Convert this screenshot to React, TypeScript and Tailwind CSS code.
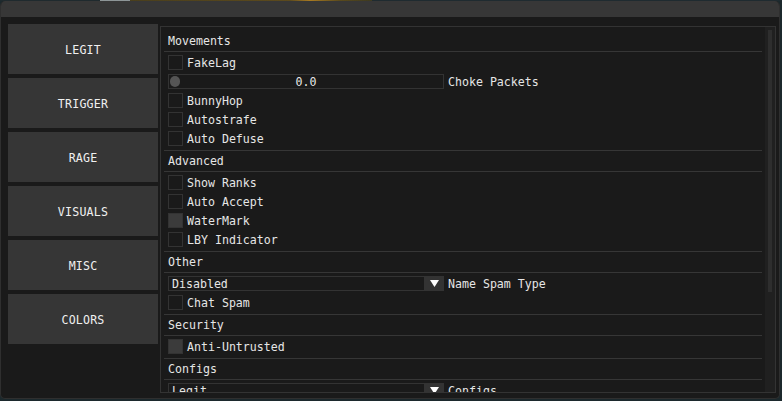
const tabs = ["LEGIT", "TRIGGER", "RAGE", "VISUALS", "MISC", "COLORS"];

const Separator = () => <div className="h-px w-[598px] -ml-1 -mb-px bg-[#363636] shrink-0" />;

const Header = ({ title }: { title: string }) => (
  <div className="h-[13px] leading-[13px] shrink-0 translate-y-px">{title}</div>
);

const Checkbox = ({ label, checked = false }: { label: string; checked?: boolean }) => (
  <div className="flex items-center h-[15px] shrink-0">
    <div
      className={`w-[15px] h-[15px] border border-[#333333] ${checked ? "bg-[#3b3b3b]" : "bg-[#1a1a1a]"}`}
    />
    <span className="ml-1 leading-[15px] translate-y-px">{label}</span>
  </div>
);

const SliderRow = ({ value, label }: { value: string; label: string }) => (
  <div className="flex items-center h-[15px] shrink-0">
    <div className="relative w-[276px] h-[15px] border border-[#333333] flex items-center justify-center">
      <div className="absolute left-px top-px w-[10px] h-[11px] rounded-full bg-[#555555]" />
      <span className="leading-[13px] translate-y-px">{value}</span>
    </div>
    <span className="ml-1 leading-[15px] translate-y-px">{label}</span>
  </div>
);

const ComboRow = ({ value, label }: { value: string; label: string }) => (
  <div className="flex items-center h-[15px] shrink-0">
    <div className="w-[276px] h-[15px] border border-[#333333] flex items-center">
      <span className="flex-1 pl-[3px] leading-[13px] translate-y-px">{value}</span>
      <div className="w-[20px] h-[15px] -mr-px bg-[#333333] flex items-center justify-center">
        <svg width="9" height="7" viewBox="0 0 9 7">
          <path d="M0 0 H9 L4.5 7 Z" fill="#ffffff" />
        </svg>
      </div>
    </div>
    <span className="ml-1 leading-[15px] translate-y-px">{label}</span>
  </div>
);

export default function App() {
  return (
    <div className="w-[782px] h-[401px] bg-[#1c292d] overflow-hidden font-['DejaVu_Sans_Mono',monospace] text-[11.6px] text-[#e6e6e6]">
      <div className="h-px w-full bg-[linear-gradient(90deg,#1f2a2e_0px,#1f2a2e_100px,#8d9597_100px,#8d9597_130px,#4a3f1c_130px,#5c4a1d_290px,#a87a22_310px,#5a4a1c_340px,#3d3a20_372px,#1f2b30_372px)]" />
      <div className="w-[780px] h-[398px] rounded-[5px] overflow-hidden bg-[#1a1a1a] border-x border-b border-[#2f2f2f] flex flex-col">
        <div className="h-[16px] bg-[#373737] shrink-0 -mx-px" />
        <div className="flex flex-1 pl-[7px] pt-[7px]">
          <div className="flex flex-col gap-1 w-[150px] shrink-0">
            {tabs.map((t) => (
              <div
                key={t}
                className="h-[50px] pt-[3px] bg-[#363636] flex items-center justify-center text-[#f0f0f0] tracking-[0.2px]"
              >
                {t}
              </div>
            ))}
          </div>
          <div className="ml-[2px] mt-[2px] w-[616px] h-[367px] border border-[#333333] flex overflow-hidden">
            <div className="flex-1 flex flex-col gap-1 pl-[7px] pt-[7px] pr-[3px] overflow-hidden">
              <Header title="Movements" />
              <Separator />
              <Checkbox label="FakeLag" />
              <SliderRow value="0.0" label="Choke Packets" />
              <Checkbox label="BunnyHop" />
              <Checkbox label="Autostrafe" />
              <Checkbox label="Auto Defuse" />
              <Separator />
              <Header title="Advanced" />
              <Separator />
              <Checkbox label="Show Ranks" />
              <Checkbox label="Auto Accept" />
              <Checkbox label="WaterMark" checked />
              <Checkbox label="LBY Indicator" />
              <Separator />
              <Header title="Other" />
              <Separator />
              <ComboRow value="Disabled" label="Name Spam Type" />
              <Checkbox label="Chat Spam" />
              <Separator />
              <Header title="Security" />
              <Separator />
              <Checkbox label="Anti-Untrusted" checked />
              <Separator />
              <Header title="Configs" />
              <Separator />
              <ComboRow value="Legit" label="Configs" />
            </div>
            <div className="w-[10px] bg-[#202020] shrink-0 pt-[3px] pl-[3px]">
              <div className="w-[4px] h-[262px] bg-[#2e2e2e]" />
            </div>
          </div>
        </div>
      </div>
    </div>
  );
}
